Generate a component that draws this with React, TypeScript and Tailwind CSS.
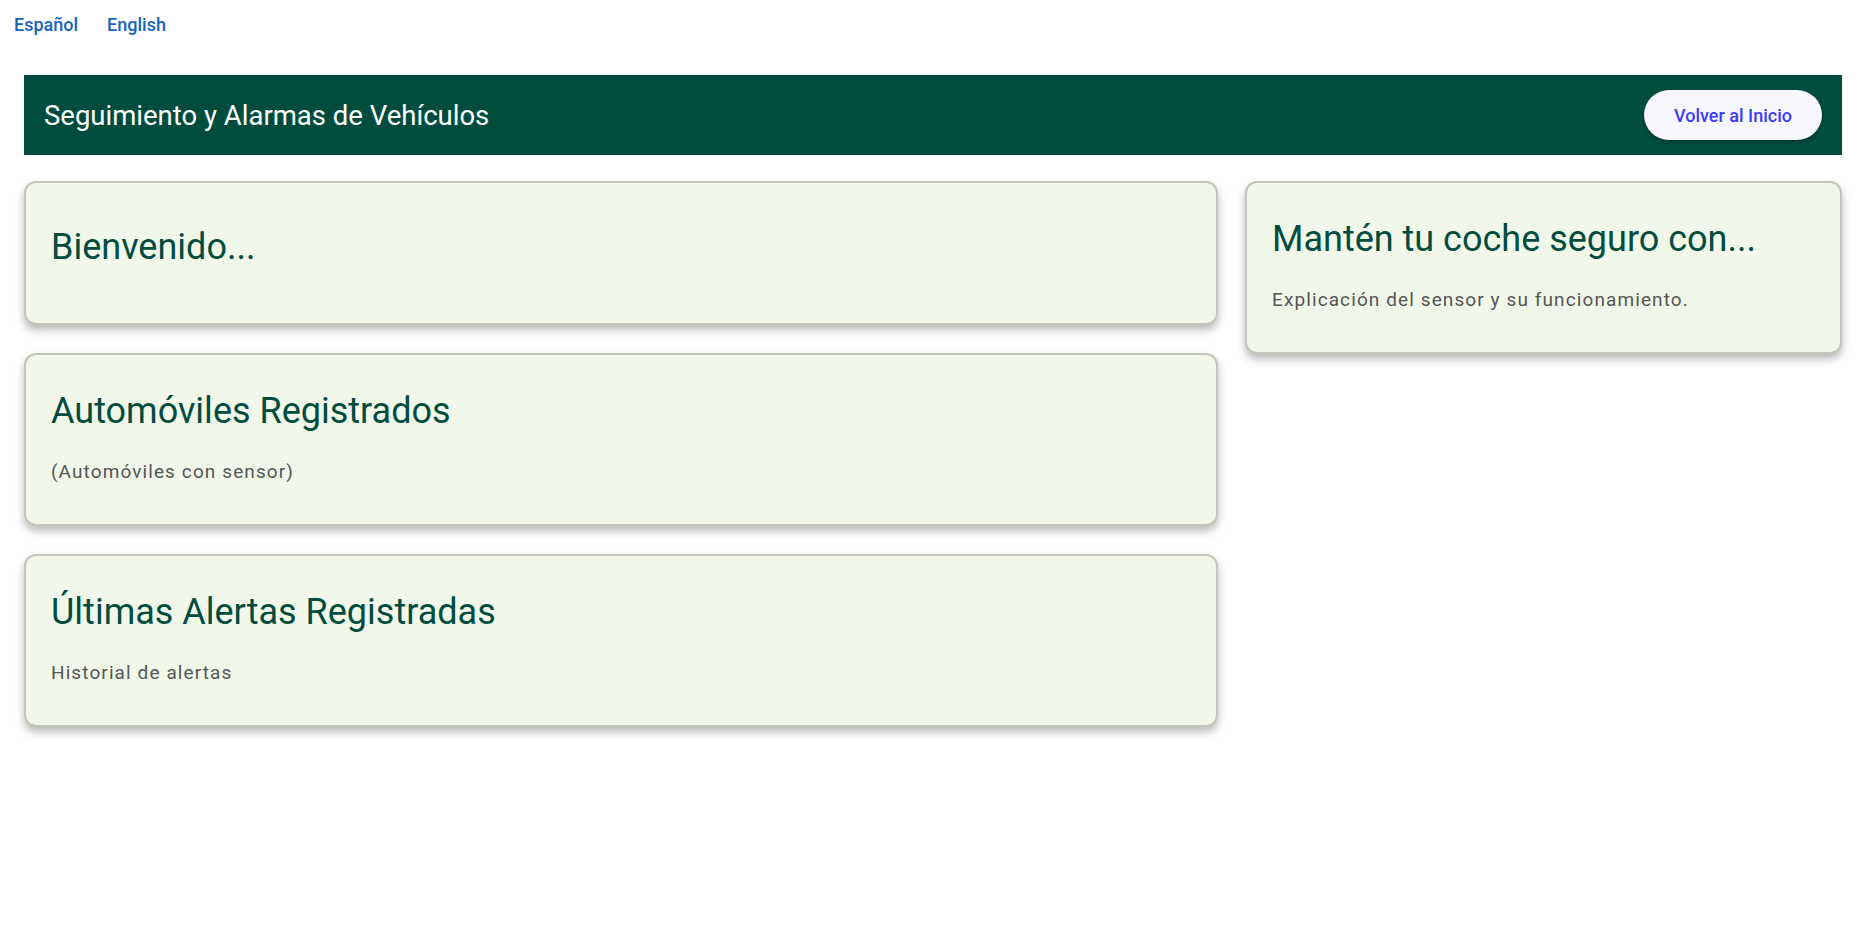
import React from "react";

function Card({
  title,
  text,
  className,
}: {
  title: string;
  text?: string;
  className?: string;
}) {
  return (
    <div
      className={
        "rounded-[12px] border-2 border-[#c3c6b8] bg-[#f1f8e9] pl-[25px] pr-[24px] shadow-[0_5px_9px_rgba(0,0,0,0.28)] " +
        (className ?? "")
      }
    >
      <h2 className="text-[36px] leading-[42px] font-normal text-[#004d40]">{title}</h2>
      {text && (
        <p className="mt-[28px] text-[19px] leading-[24px] tracking-[1.1px] text-[#555555]">{text}</p>
      )}
    </div>
  );
}

export default function App() {
  return (
    <div
      className="min-h-screen bg-white"
      style={{ fontFamily: "Roboto, 'Noto Sans', Arial, sans-serif" }}
    >
      <nav className="flex gap-[29px] pl-[14px] pt-[13px] text-[18px] leading-[24px] font-medium text-[#1565c0]">
        <a href="#" className="cursor-pointer">Español</a>
        <a href="#" className="cursor-pointer">English</a>
      </nav>

      <header className="mx-[24px] mt-[38px] flex h-[80px] items-center justify-between bg-[#004d40] px-[20px]">
        <h1 className="pt-[2px] text-[27.5px] leading-[32px] font-normal text-white">
          Seguimiento y Alarmas de Vehículos
        </h1>
        <button className="h-[50px] rounded-full bg-[#f8f7fe] px-[30px] text-[18px] font-medium text-[#3b3bf6] shadow-[0_2px_4px_rgba(0,0,0,0.3)]">
          Volver al Inicio
        </button>
      </header>

      <main className="mx-[24px] mt-[26px] grid grid-cols-[2fr_1fr] items-start gap-[27px]">
        <div className="flex flex-col gap-[28px]">
          <Card title="Bienvenido..." className="pt-[43px] pb-[55px]" />
          <Card
            title="Automóviles Registrados"
            text="(Automóviles con sensor)"
            className="pt-[35px] pb-[40px]"
          />
          <Card
            title="Últimas Alertas Registradas"
            text="Historial de alertas"
            className="pt-[35px] pb-[40px]"
          />
        </div>
        <div>
          <Card
            title="Mantén tu coche seguro con..."
            text="Explicación del sensor y su funcionamiento."
            className="pt-[35px] pb-[40px]"
          />
        </div>
      </main>
    </div>
  );
}
